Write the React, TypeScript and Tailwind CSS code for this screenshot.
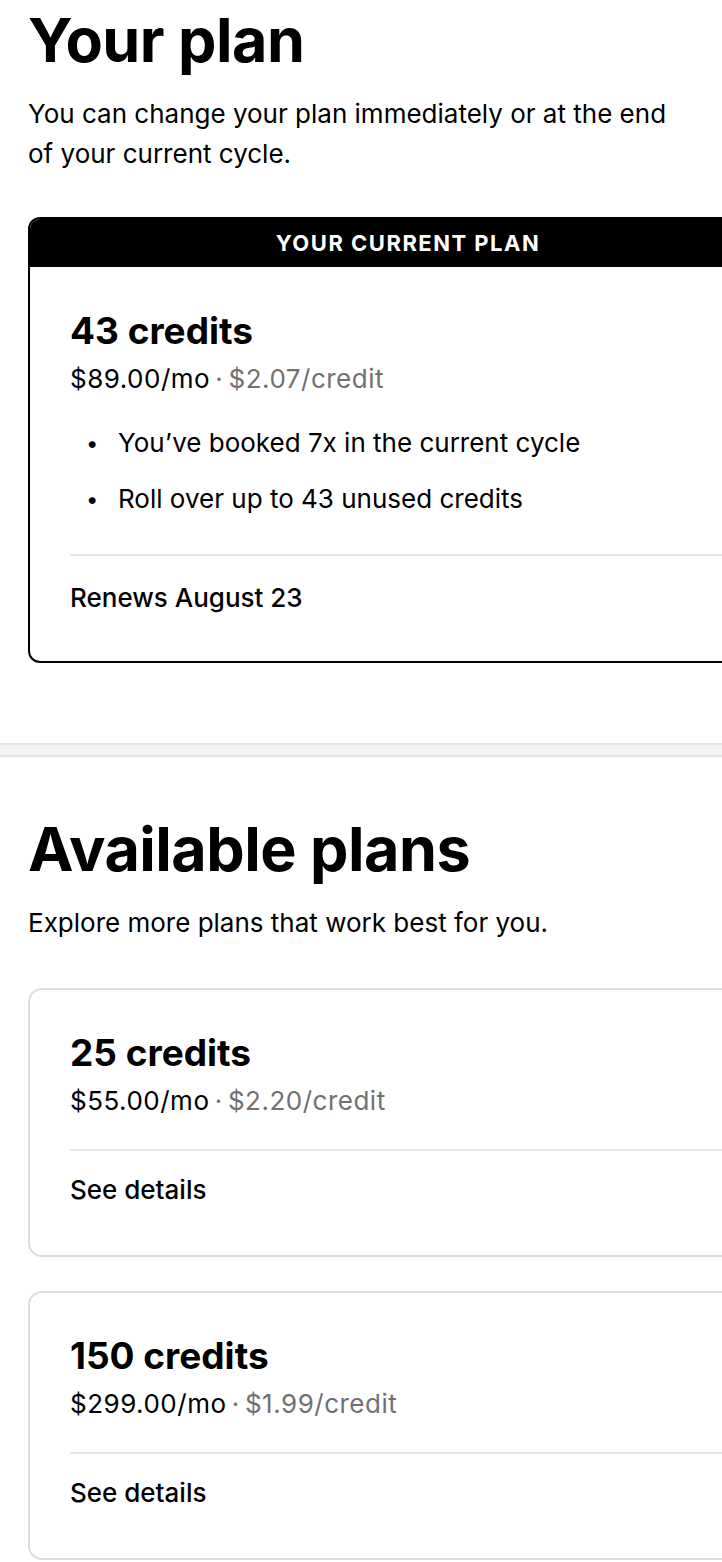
import React from 'react'

const font = { fontFamily: 'Inter, "Noto Sans", sans-serif' }

interface Plan {
    credits: number
    price: string
    perCredit: string
}

const plans: Plan[] = [
    { credits: 25, price: '$55.00', perCredit: '$2.20' },
    { credits: 150, price: '$299.00', perCredit: '$1.99' },
]

function PriceLine({ price, perCredit }: { price: string; perCredit: string }) {
    return (
        <p className="mt-[10px] text-[26px] leading-[36px] tracking-[0.5px] text-black">
            {price}/mo
            <span className="text-[#717171]">{'\u2009·\u2009'}{perCredit}/credit</span>
        </p>
    )
}

function PlanCard({ plan }: { plan: Plan }) {
    return (
        <div className="w-[760px] rounded-[14px] border-2 border-[#dddddd] px-[40px] pt-[43px] pb-[47px]">
            <h3 className="text-[37px] leading-[40px] font-bold text-black">{plan.credits} credits</h3>
            <PriceLine price={plan.price} perCredit={plan.perCredit} />
            <div className="mt-[30px] h-[2px] bg-[#e6e6e6]" />
            <p className="mt-[21px] text-[26px] leading-[36px] font-medium text-black">See details</p>
        </div>
    )
}

export default function App() {
    return (
        <div className="w-[722px] min-h-[1562px] overflow-hidden bg-white text-black" style={font}>
            {/* Current plan */}
            <section className="px-[28px] pt-[4px]">
                <h1 className="text-[61px] leading-[72px] font-bold tracking-[-0.5px]">Your plan</h1>
                <p className="mt-[18px] w-[670px] text-[26px] leading-[40px]">
                    You can change your plan immediately or at the end of your current cycle.
                </p>

                <div className="mt-[43px] w-[760px] rounded-[12px] border-2 border-black overflow-hidden">
                    <div className="bg-black h-[48px] flex items-center justify-center">
                        <span className="text-white text-[22px] font-bold tracking-[1.5px]">YOUR CURRENT PLAN</span>
                    </div>
                    <div className="px-[40px] pt-[44px] pb-[45px]">
                        <h3 className="text-[37px] leading-[40px] font-bold">43 credits</h3>
                        <PriceLine price="$89.00" perCredit="$2.07" />
                        <ul className="mt-[28px] flex flex-col gap-[20px] pl-[16px]">
                            <li className="flex items-center text-[26px] leading-[36px]">
                                <span className="w-[32px] text-[22px]">•</span>
                                You’ve booked 7x in the current cycle
                            </li>
                            <li className="flex items-center text-[26px] leading-[36px]">
                                <span className="w-[32px] text-[22px]">•</span>
                                Roll over up to 43 unused credits
                            </li>
                        </ul>
                        <div className="mt-[37px] h-[2px] bg-[#e6e6e6]" />
                        <p className="mt-[24px] text-[26px] leading-[36px] font-medium">Renews August 23</p>
                    </div>
                </div>
            </section>

            {/* Section divider */}
            <div className="mt-[80px] h-[14px] bg-[#f3f3f3] border-y-2 border-[#e4e4e4]" />

            {/* Available plans */}
            <section className="px-[28px] pt-[56px] pb-[4px]">
                <h2 className="text-[61px] leading-[72px] font-bold tracking-[-0.5px]">Available plans</h2>
                <p className="mt-[18px] text-[26px] leading-[40px]">Explore more plans that work best for you.</p>
                <div className="mt-[45px] flex flex-col gap-[34px]">
                    {plans.map(plan => (
                        <PlanCard key={plan.credits} plan={plan} />
                    ))}
                </div>
            </section>
        </div>
    )
}
